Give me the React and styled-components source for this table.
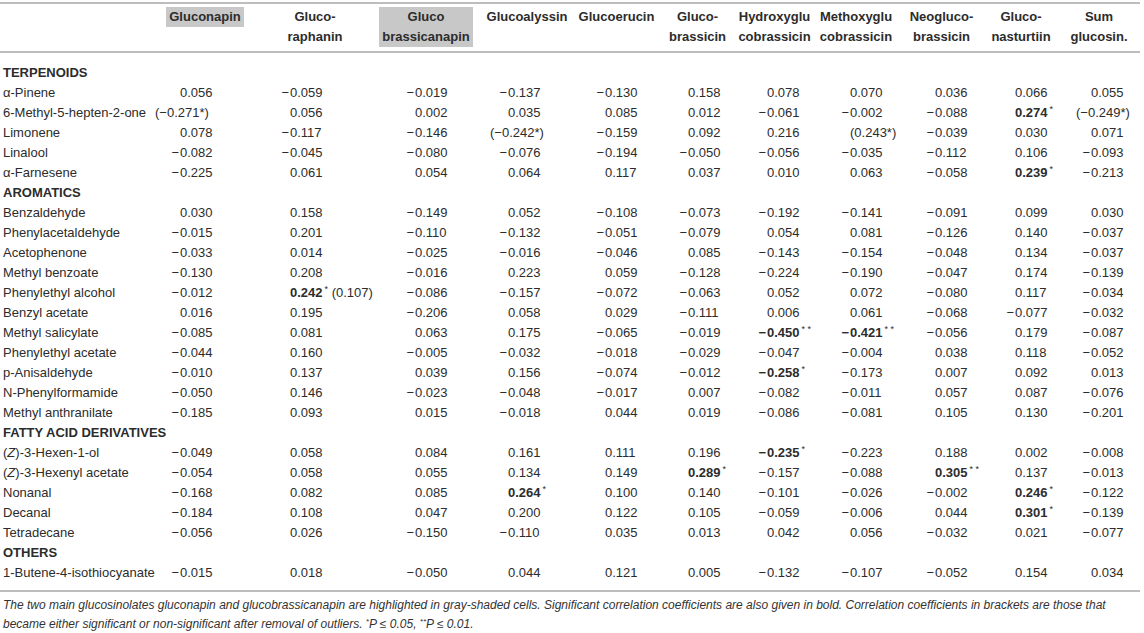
import React from "react";
import styled, { createGlobalStyle } from "styled-components";

const COLS = "152px 106px 114px 108px 94px 85px 77px 77px 86px 85px 74px 82px";
const PADS = [18, 22, 33, 18, 21, 19, 21, 27, 26, 21, 23];

const headers = [
  { lines: ["Gluconapin"], shaded: true },
  { lines: ["Gluco-", "raphanin"] },
  { lines: ["Gluco", "brassicanapin"], shaded: true },
  { lines: ["Glucoalyssin"] },
  { lines: ["Glucoerucin"] },
  { lines: ["Gluco-", "brassicin"] },
  { lines: ["Hydroxyglu", "cobrassicin"] },
  { lines: ["Methoxyglu", "cobrassicin"] },
  { lines: ["Neogluco-", "brassicin"] },
  { lines: ["Gluco-", "nasturtiin"] },
  { lines: ["Sum", "glucosin."] },
];

// "!" = bold, trailing * = superscript, "(..)@n" = bracketed value shifted n px
const sections = [
  {
    title: "TERPENOIDS",
    rows: [
      ["α-Pinene", "0.056", "−0.059", "−0.019", "−0.137", "−0.130", "0.158", "0.078", "0.070", "0.036", "0.066", "0.055"],
      ["6-Methyl-5-hepten-2-one", "(−0.271*)@-15", "0.056", "0.002", "0.035", "0.085", "0.012", "−0.061", "−0.002", "−0.088", "!0.274*", "(−0.249*)@-5"],
      ["Limonene", "0.078", "−0.117", "−0.146", "(−0.242*)@-8", "−0.159", "0.092", "0.216", "(0.243*)@10", "−0.039", "0.030", "0.071"],
      ["Linalool", "−0.082", "−0.045", "−0.080", "−0.076", "−0.194", "−0.050", "−0.056", "−0.035", "−0.112", "0.106", "−0.093"],
      ["α-Farnesene", "−0.225", "0.061", "0.054", "0.064", "0.117", "0.037", "0.010", "0.063", "−0.058", "!0.239*", "−0.213"],
    ],
  },
  {
    title: "AROMATICS",
    rows: [
      ["Benzaldehyde", "0.030", "0.158", "−0.149", "0.052", "−0.108", "−0.073", "−0.192", "−0.141", "−0.091", "0.099", "0.030"],
      ["Phenylacetaldehyde", "−0.015", "0.201", "−0.110", "−0.132", "−0.051", "−0.079", "0.054", "0.081", "−0.126", "0.140", "−0.037"],
      ["Acetophenone", "−0.033", "0.014", "−0.025", "−0.016", "−0.046", "0.085", "−0.143", "−0.154", "−0.048", "0.134", "−0.037"],
      ["Methyl benzoate", "−0.130", "0.208", "−0.016", "0.223", "0.059", "−0.128", "−0.224", "−0.190", "−0.047", "0.174", "−0.139"],
      ["Phenylethyl alcohol", "−0.012", "!0.242* (0.107)", "−0.086", "−0.157", "−0.072", "−0.063", "0.052", "0.072", "−0.080", "0.117", "−0.034"],
      ["Benzyl acetate", "0.016", "0.195", "−0.206", "0.058", "0.029", "−0.111", "0.006", "0.061", "−0.068", "−0.077", "−0.032"],
      ["Methyl salicylate", "−0.085", "0.081", "0.063", "0.175", "−0.065", "−0.019", "!−0.450**", "!−0.421**", "−0.056", "0.179", "−0.087"],
      ["Phenylethyl acetate", "−0.044", "0.160", "−0.005", "−0.032", "−0.018", "−0.029", "−0.047", "−0.004", "0.038", "0.118", "−0.052"],
      ["p-Anisaldehyde", "−0.010", "0.137", "0.039", "0.156", "−0.074", "−0.012", "!−0.258*", "−0.173", "0.007", "0.092", "0.013"],
      ["N-Phenylformamide", "−0.050", "0.146", "−0.023", "−0.048", "−0.017", "0.007", "−0.082", "−0.011", "0.057", "0.087", "−0.076"],
      ["Methyl anthranilate", "−0.185", "0.093", "0.015", "−0.018", "0.044", "0.019", "−0.086", "−0.081", "0.105", "0.130", "−0.201"],
    ],
  },
  {
    title: "FATTY ACID DERIVATIVES",
    rows: [
      [["(", <i key="z">Z</i>, ")-3-Hexen-1-ol"], "−0.049", "0.058", "0.084", "0.161", "0.111", "0.196", "!−0.235*", "−0.223", "0.188", "0.002", "−0.008"],
      [["(", <i key="z">Z</i>, ")-3-Hexenyl acetate"], "−0.054", "0.058", "0.055", "0.134", "0.149", "!0.289*", "−0.157", "−0.088", "!0.305**", "0.137", "−0.013"],
      ["Nonanal", "−0.168", "0.082", "0.085", "!0.264*", "0.100", "0.140", "−0.101", "−0.026", "−0.002", "!0.246*", "−0.122"],
      ["Decanal", "−0.184", "0.108", "0.047", "0.200", "0.122", "0.105", "−0.059", "−0.006", "0.044", "!0.301*", "−0.139"],
      ["Tetradecane", "−0.056", "0.026", "−0.150", "−0.110", "0.035", "0.013", "0.042", "0.056", "−0.032", "0.021", "−0.077"],
    ],
  },
  {
    title: "OTHERS",
    rows: [
      ["1-Butene-4-isothiocyanate", "−0.015", "0.018", "−0.050", "0.044", "0.121", "0.005", "−0.132", "−0.107", "−0.052", "0.154", "0.034"],
    ],
  },
];

const renderValue = (raw) => {
  let [text, shift] = raw.split("@");
  if (text.startsWith("(")) {
    return <Bracketed $shift={Number(shift || 0)}>{text}</Bracketed>;
  }
  const bold = text.startsWith("!");
  if (bold) text = text.slice(1);
  let extra = "";
  const sp = text.indexOf(" ");
  if (sp > 0) {
    extra = text.slice(sp);
    text = text.slice(0, sp);
  }
  const stars = (text.match(/\*+$/) || [""])[0];
  text = text.replace(/\*+$/, "");
  const neg = text.startsWith("−");
  return (
    <Num $bold={bold}>
      <Sign>{neg ? "−" : ""}</Sign>
      {neg ? text.slice(1) : text}
      {stars && <Star>{stars.split("").join(" ")}</Star>}
      {extra && <Extra>{extra}</Extra>}
    </Num>
  );
};

const App = () => {
  return (
    <Page>
      <GlobalStyle />
      <Table>
        <Head>
          <span />
          {headers.map((h, i) => (
            <HeadCell key={i}>
              <HeadBox $shaded={h.shaded}>
                {h.lines.map((l) => (
                  <div key={l}>{l}</div>
                ))}
              </HeadBox>
            </HeadCell>
          ))}
        </Head>
        <Body>
          {sections.map((s) => (
            <React.Fragment key={s.title}>
              <SectionRow>{s.title}</SectionRow>
              {s.rows.map((r, ri) => (
                <Row key={ri}>
                  <Label>{r[0]}</Label>
                  {r.slice(1).map((v, ci) => (
                    <ValueCell key={ci} $pad={PADS[ci]}>
                      {renderValue(v)}
                    </ValueCell>
                  ))}
                </Row>
              ))}
            </React.Fragment>
          ))}
        </Body>
      </Table>
      <Note>
        The two main glucosinolates gluconapin and glucobrassicanapin are highlighted in gray-shaded cells.
        Significant correlation coefficients are also given in bold. Correlation coefficients in brackets are
        those that
        <br />
        became either significant or non-significant after removal of outliers. <sup>*</sup>
        P ≤ 0.05, <sup>**</sup>P ≤ 0.01.
      </Note>
    </Page>
  );
};

export default App;

const GlobalStyle = createGlobalStyle`
  body {
    margin: 0;
    background: #ffffff;
  }
`;

const Page = styled.div`
  width: 1140px;
  padding-top: 2px;
  font-family: "Liberation Sans", Arial, sans-serif;
  font-size: 13px;
  color: #2c2c2c;
`;

const Table = styled.div`
  border-top: 2px solid #bdbdbd;
  border-bottom: 2px solid #bdbdbd;
  padding-bottom: 7px;
`;

const Head = styled.div`
  display: grid;
  grid-template-columns: ${COLS};
  padding: 3px 0 4px;
  border-bottom: 2px solid #bdbdbd;
`;

const HeadCell = styled.div`
  display: flex;
  justify-content: center;
  align-items: flex-start;
`;

const HeadBox = styled.div`
  background: ${(p) => (p.$shaded ? "#c8c8c8" : "transparent")};
  padding: 0 3px;
  font-weight: bold;
  line-height: 20px;
  text-align: center;
  white-space: nowrap;
`;

const Body = styled.div`
  padding-top: 10px;
`;

const SectionRow = styled.div`
  height: 20px;
  line-height: 20px;
  padding-left: 3px;
  font-weight: bold;
`;

const Row = styled.div`
  display: grid;
  grid-template-columns: ${COLS};
  height: 20px;
  line-height: 20px;
  white-space: nowrap;
`;

const Label = styled.div`
  padding-left: 3px;
`;

const ValueCell = styled.div`
  padding-left: ${(p) => p.$pad}px;
`;

const Num = styled.span`
  font-weight: ${(p) => (p.$bold ? "bold" : "normal")};
`;

const Sign = styled.span`
  display: inline-block;
  width: 10px;
  padding-right: 1px;
  box-sizing: border-box;
  text-align: right;
`;

const Star = styled.span`
  position: relative;
  top: -5px;
  margin-left: 2px;
  font-size: 9px;
  font-weight: normal;
`;

const Extra = styled.span`
  font-weight: normal;
`;

const Bracketed = styled.span`
  display: inline-block;
  margin-left: ${(p) => p.$shift}px;
`;

const Note = styled.div`
  padding: 4px 0 0 3px;
  font-size: 12px;
  font-style: italic;
  line-height: 19px;
  color: #333333;
  white-space: nowrap;

  sup {
    font-size: 8px;
    vertical-align: 4px;
    line-height: 0;
  }
`;
